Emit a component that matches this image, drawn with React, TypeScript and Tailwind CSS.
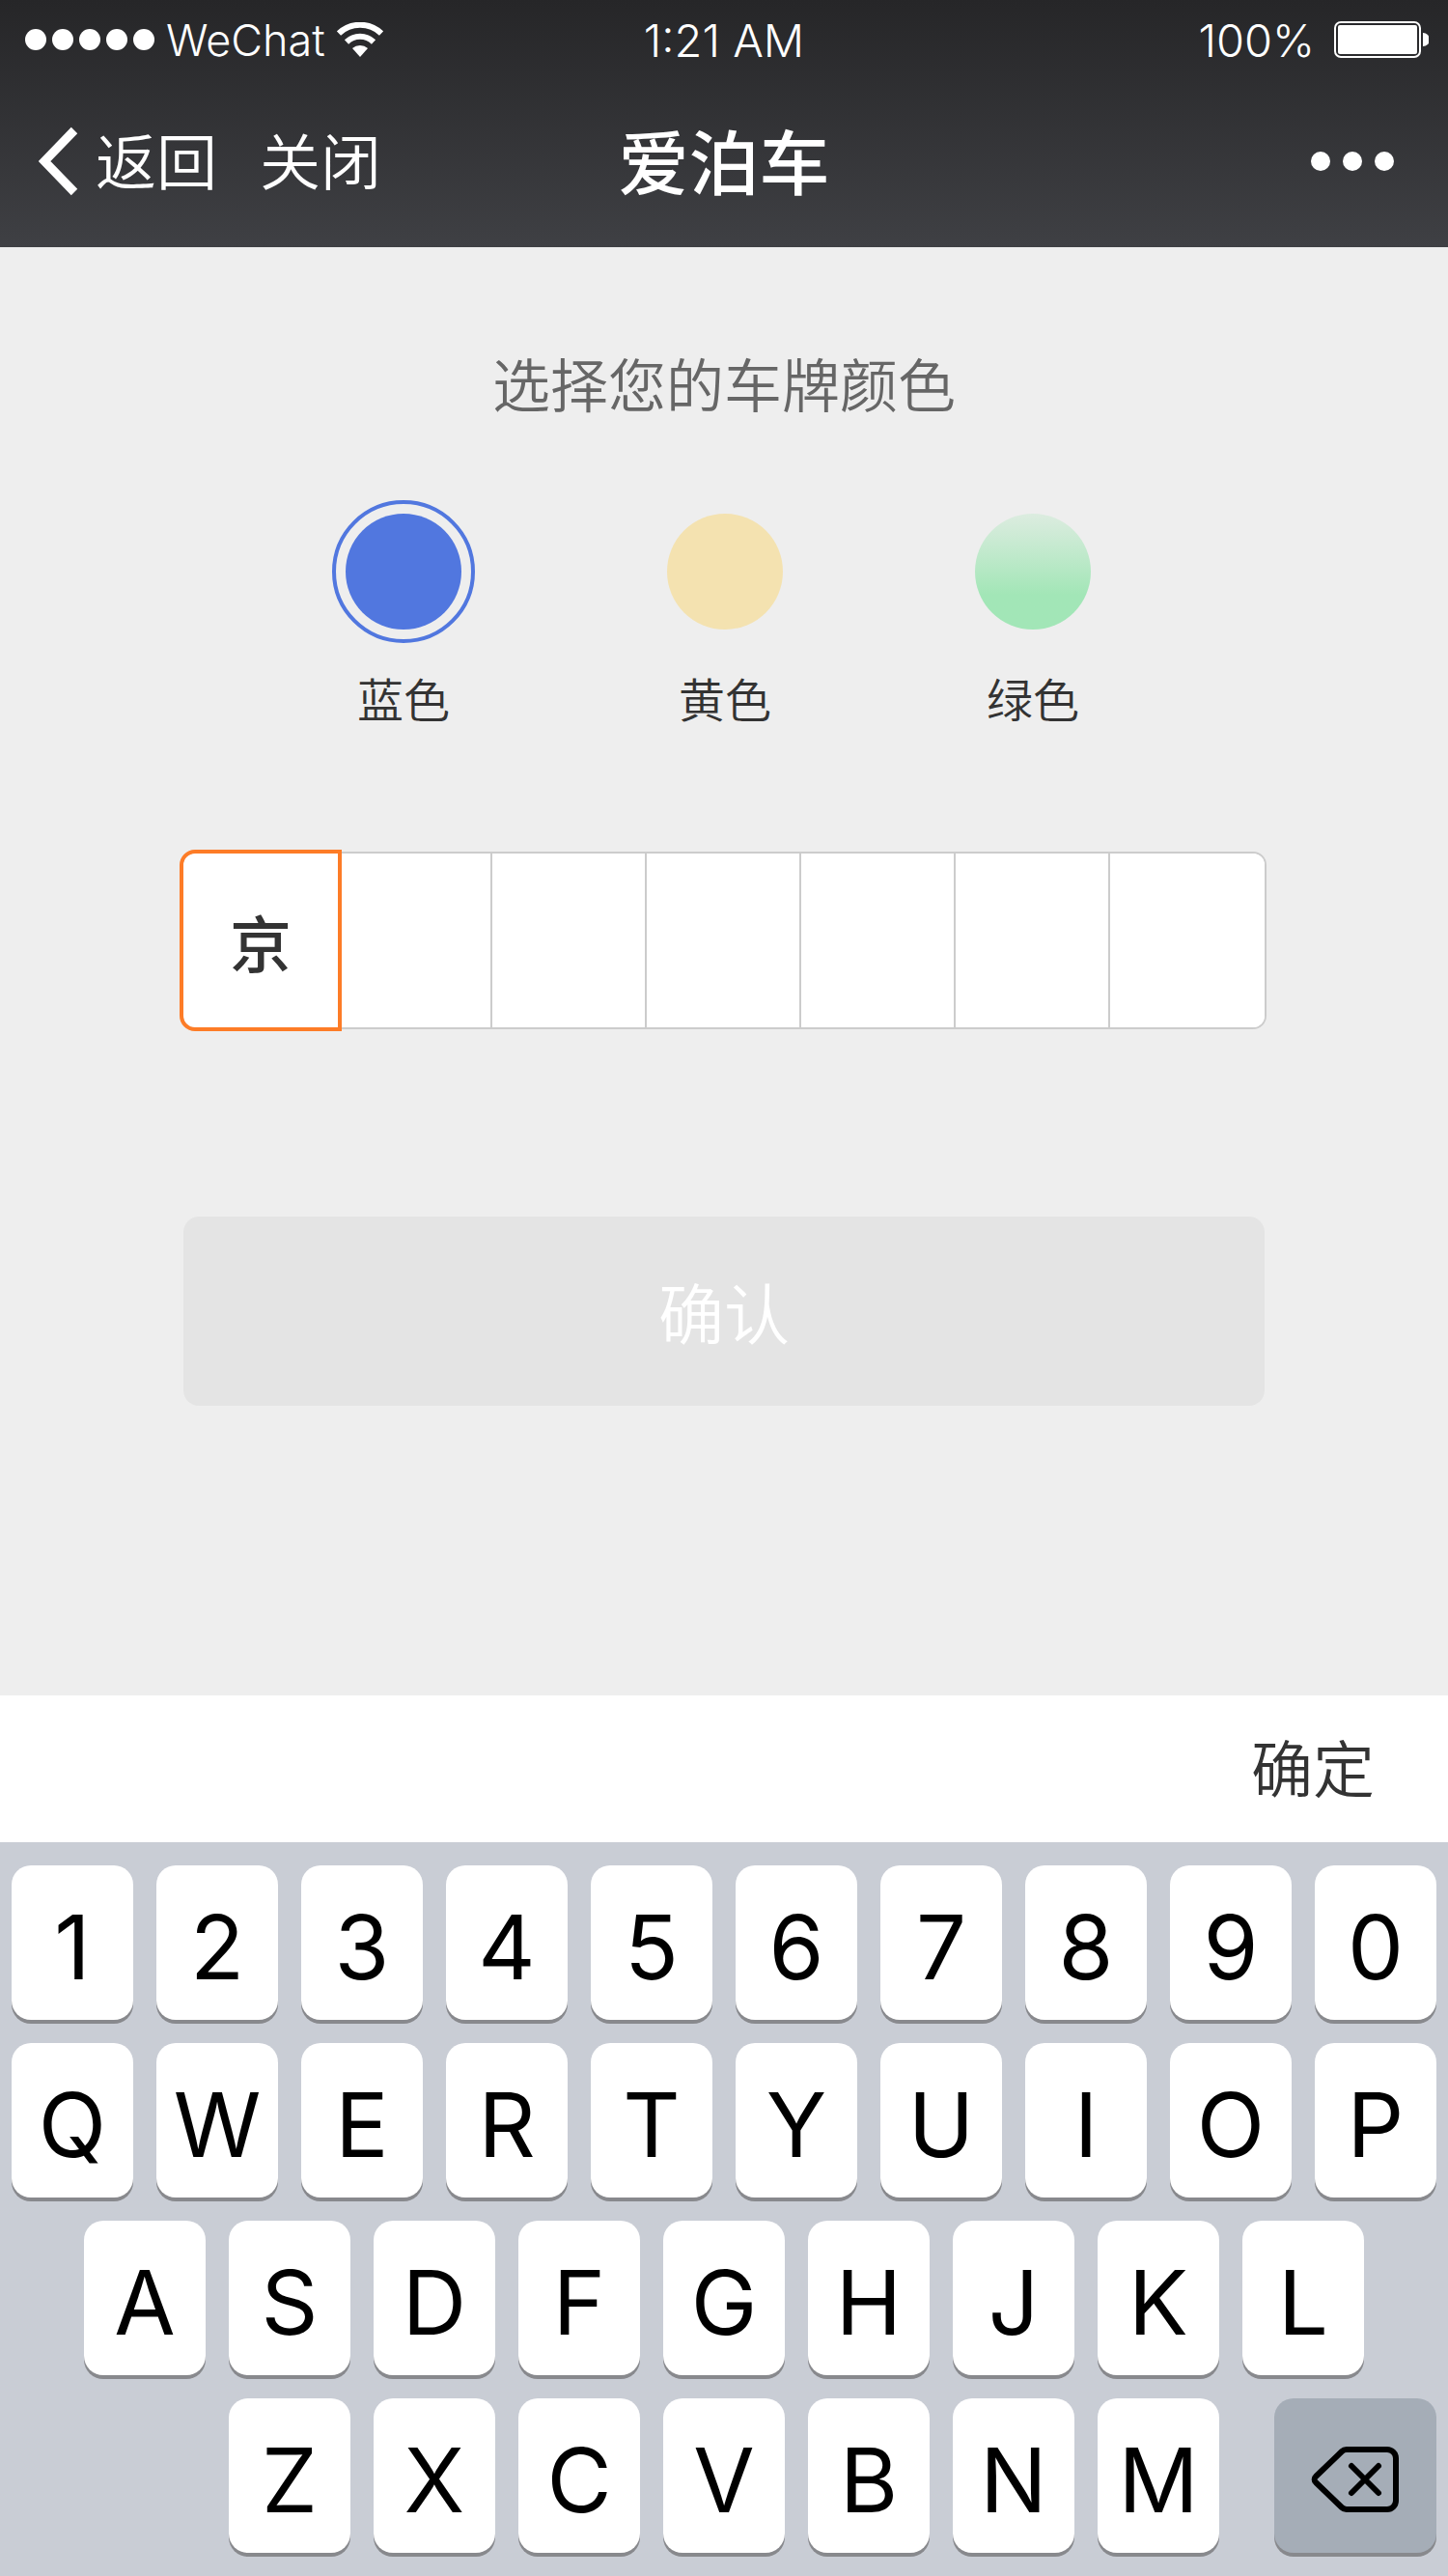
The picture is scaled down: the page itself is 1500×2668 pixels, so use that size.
import { useState } from "react";

const SWATCHES = [
  { id: "blue", label: "蓝色", fill: "bg-[#5177df] outline-[#5177df]" },
  { id: "yellow", label: "黄色", fill: "bg-[#f4e2b0] outline-[#f4e2b0]" },
  { id: "green", label: "绿色", fill: "bg-linear-to-b from-[#dcece0] to-[#a2e6b7] to-70% outline-[#a2e6b7]" },
];

const ROWS = [
  { keys: "1234567890", start: "col-start-1" },
  { keys: "QWERTYUIOP", start: "col-start-1" },
  { keys: "ASDFGHJKL", start: "col-start-2" },
  { keys: "ZXCVBNM", start: "col-start-4" },
];

const PLATE_LENGTH = 7;

function StatusBar() {
  return (
    <div className="grid h-[82px] grid-cols-[1fr_auto_1fr] items-center px-5 font-['Inter',sans-serif] text-[47px] leading-none font-light">
      <div className="flex items-center pl-1.5">
        <div className="flex gap-1.5">
          {[0, 1, 2, 3, 4].map((n) => (
            <span key={n} className="size-[22px] rounded-full bg-white" />
          ))}
        </div>
        <span className="ml-3 text-[45px]">WeChat</span>
        <svg className="ml-3 h-9 w-12" viewBox="0 0 48 36" fill="none" aria-hidden="true">
          <path d="M2 11.5a32 32 0 0 1 44 0" stroke="#fff" strokeWidth="6" />
          <path d="M10 20.5a20 20 0 0 1 28 0" stroke="#fff" strokeWidth="6" />
          <path d="M16 27a12 12 0 0 1 16 0l-8 9z" fill="#fff" />
        </svg>
      </div>
      <span className="text-center">1:21 AM</span>
      <div className="flex items-center justify-end gap-5">
        <span>100%</span>
        <svg className="h-[38px] w-[98px]" viewBox="0 0 98 38" fill="none" aria-hidden="true">
          <rect x="1" y="1" width="88" height="36" rx="6" stroke="#fff" strokeWidth="2" />
          <rect x="4" y="4" width="82" height="30" rx="2" fill="#fff" />
          <path d="M92 12a7 7 0 0 1 0 14z" fill="#fff" />
        </svg>
      </div>
    </div>
  );
}

function NavBar() {
  return (
    <nav className="grid h-[174px] grid-cols-[1fr_auto_1fr] items-center px-10 pb-1">
      <div className="flex items-center text-[63px] leading-[80px] font-[350]">
        <button type="button" className="flex items-center gap-[18px]">
          <svg className="h-[72px] w-[41px]" viewBox="0 0 41 72" fill="none" aria-hidden="true">
            <path d="M37 4 6 36l31 32" stroke="#fff" strokeWidth="9" strokeLinejoin="miter" />
          </svg>
          <span className="pb-1.5">返回</span>
        </button>
        <button type="button" className="ml-11 pb-1.5">关闭</button>
      </div>
      <h1 className="pb-1.5 text-[73px] leading-[88px] font-medium">爱泊车</h1>
      <button type="button" aria-label="更多" className="mr-4 flex gap-[13px] justify-self-end">
        <span className="size-5 rounded-full bg-white" />
        <span className="size-5 rounded-full bg-white" />
        <span className="size-5 rounded-full bg-white" />
      </button>
    </nav>
  );
}

const KEY =
  "h-40 rounded-[20px] shadow-[0_4px_0_#88898d] flex items-center justify-center text-black";

function BackspaceIcon() {
  return (
    <svg className="h-[68px] w-[92px]" viewBox="0 0 92 68" fill="none" stroke="#000" aria-hidden="true">
      <path
        d="M37 3H79a9 9 0 0 1 9 9V56a9 9 0 0 1-9 9H37a7 7 0 0 1-5-2L5 37a4 4 0 0 1 0-6L32 5a7 7 0 0 1 5-2z"
        strokeWidth="6"
      />
      <path d="M42 20 70 48M70 20 42 48" strokeWidth="6" strokeLinecap="round" />
    </svg>
  );
}

export default function App() {
  const [color, setColor] = useState("blue");
  const [plate, setPlate] = useState("京");
  const [active, setActive] = useState(0);

  const press = (key: string) => {
    if (plate.length >= PLATE_LENGTH) return;
    setPlate(plate + key);
    setActive(Math.min(plate.length + 1, PLATE_LENGTH - 1));
  };

  const erase = () => {
    setPlate(plate.slice(0, -1));
    setActive(Math.max(plate.length - 1, 0));
  };

  return (
    <div className="flex min-h-screen flex-col bg-[#eeeeee] font-['Noto_Sans_CJK_SC',sans-serif] text-[#333333]">
      <header className="bg-linear-to-b from-[#262628] to-[#3f4044] text-white">
        <StatusBar />
        <NavBar />
      </header>

      <main className="grow pb-[300px]">
        <fieldset className="pt-24">
          <legend className="float-left w-full text-center text-[60px] leading-[88px] font-[350] text-[#666666]">
            选择您的车牌颜色
          </legend>
          <div className="clear-both flex justify-center gap-[199px] pt-[92px] pr-[26px]">
            {SWATCHES.map((s) => (
              <label
                key={s.id}
                className="flex flex-col items-center gap-[34px] text-[48px] leading-[72px] font-[350] whitespace-nowrap has-checked:px-3.5"
              >
                <input
                  type="radio"
                  name="plate-color"
                  checked={color === s.id}
                  onChange={() => setColor(s.id)}
                  className={"size-[120px] appearance-none rounded-full outline-offset-10 checked:outline-4 " + s.fill}
                />
                {s.label}
              </label>
            ))}
          </div>
        </fieldset>

        <div className="mx-[188px] mt-[124px] grid grid-cols-7 rounded-[14px] border-2 border-[#cccccc] bg-white">
          {Array.from({ length: PLATE_LENGTH }, (_, i) => (
            <input
              key={i}
              type="text"
              readOnly
              aria-label={"车牌第" + (i + 1) + "位"}
              value={plate[i] ?? ""}
              onFocus={() => setActive(i)}
              className={
                "h-[180px] w-full min-w-0 bg-white text-center text-[64px] font-medium first:rounded-l-xl last:rounded-r-xl " +
                (i === active
                  ? "relative z-10 outline-4 outline-[#fd7c27]"
                  : "border-[#cccccc] outline-none not-last:border-r-2")
              }
            />
          ))}
        </div>

        <div className="mx-[190px] mt-[194px]">
          <button
            type="button"
            disabled={plate.length < PLATE_LENGTH}
            className="h-[196px] w-full rounded-2xl bg-[#e4e4e4] text-[68px] font-[350] text-white enabled:bg-[#fd7c27]"
          >
            确认
          </button>
        </div>
      </main>

      <section aria-label="键盘">
        <div className="flex h-[152px] items-center justify-end bg-white pr-[76px] pb-2">
          <button type="button" className="text-[64px] leading-[88px] font-[350]">确定</button>
        </div>
        <div className="grid gap-6 bg-[#c9cdd5] px-3 py-6 font-['Inter',sans-serif] text-[92px] leading-none font-normal">
          {ROWS.map((row) => (
            <div key={row.keys} className="grid grid-cols-20 gap-6">
              {row.keys.split("").map((k, i) => (
                <button
                  key={k}
                  type="button"
                  onClick={() => press(k)}
                  className={KEY + " col-span-2 bg-white pt-2.5 " + (i === 0 ? row.start : "")}
                >
                  {k}
                </button>
              ))}
              {row.keys === "ZXCVBNM" && (
                <button
                  type="button"
                  aria-label="删除"
                  onClick={erase}
                  className={KEY + " col-span-3 w-[168px] justify-self-end bg-[#a5adb7] pt-2"}
                >
                  <BackspaceIcon />
                </button>
              )}
            </div>
          ))}
        </div>
      </section>
    </div>
  );
}
